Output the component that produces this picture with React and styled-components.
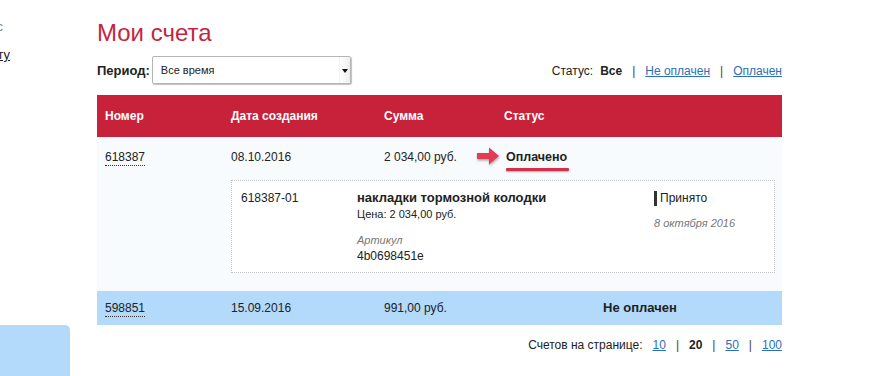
import React from 'react'
import styled, { createGlobalStyle } from 'styled-components'

const GlobalStyle = createGlobalStyle`
  html, body {
    margin: 0;
    padding: 0;
    background: #fff;
    overflow: hidden;
  }
  body {
    font-family: "Liberation Sans", Arial, sans-serif;
    font-size: 12px;
    color: #222;
  }
`

const Page = styled.div`
  display: flex;
  gap: 27px;
  height: 376px;
`

const Sidebar = styled.aside`
  width: 70px;
  flex-shrink: 0;
  display: flex;
  flex-direction: column;
`

const SideLink = styled.div`
  width: ${p => p.$width || 10}px;
  height: 14px;
  display: flex;
  justify-content: flex-end;
  overflow: hidden;
  white-space: nowrap;
  font-size: 13px;
  line-height: 14px;
  color: ${p => p.$muted ? '#888' : '#222'};
  text-decoration: ${p => p.$underline ? 'underline' : 'none'};
  margin-top: ${p => p.$top}px;
`

const SideBox = styled.div`
  margin-top: auto;
  height: 51px;
  background: #b3d9fb;
  border-top-right-radius: 5px;
`

const Main = styled.main`
  width: 685px;
  padding-top: 18px;
`

const Title = styled.h1`
  margin: 0;
  font-family: "Liberation Sans", Arial, sans-serif;
  font-weight: normal;
  font-size: 24px;
  line-height: 30px;
  color: #c4263f;
`

const Toolbar = styled.div`
  display: flex;
  align-items: center;
  justify-content: space-between;
  margin-top: 8px;
  height: 28px;
`

const Period = styled.div`
  display: flex;
  align-items: center;
  gap: 2px;
`

const Label = styled.span`
  font-weight: bold;
  font-size: 13px;
`

const Select = styled.div`
  width: 189px;
  height: 26px;
  border: 1px solid #b5b5b5;
  border-radius: 2px;
  box-shadow: 1px 1px 1px rgba(0, 0, 0, 0.25);
  display: flex;
  align-items: center;
  justify-content: space-between;
  padding-left: 8px;
  box-sizing: content-box;
  font-size: 11px;
  background: #fff;
`

const SelectArrow = styled.span`
  width: 10px;
  height: 26px;
  display: flex;
  align-items: center;
  justify-content: center;
  background: linear-gradient(to right, #fff, #eee);
  border-left: 1px solid #f2f2f2;
  &::after {
    content: '';
    border-left: 3px solid transparent;
    border-right: 3px solid transparent;
    border-top: 4px solid #111;
    margin-top: 2px;
  }
`

const Filter = styled.div`
  display: flex;
  align-items: center;
  gap: 10px;
  font-size: 12px;
  padding-top: 2px;
`

const Current = styled.b`
  font-size: 12px;
  margin-left: -3px;
`

const Sep = styled.span`
  color: #444;
`

const Link = styled.a`
  color: #2b6fb6;
  text-decoration: underline;
  cursor: pointer;
`

const Table = styled.div`
  margin-top: 11px;
`

const Cols = styled.div`
  display: grid;
  grid-template-columns: 126px 153px 120px 1fr;
  padding-left: 8px;
  align-items: center;
`

const HeadRow = styled(Cols)`
  height: 42px;
  background: #c8223b;
  color: #fff;
  font-weight: bold;
  font-size: 12px;
`

const Invoice = styled.div`
  background: ${p => p.$bg};
  padding: ${p => p.$pad};
`

const Cell = styled.div`
  line-height: 16px;
  text-align: ${p => p.$center ? 'center' : 'left'};
  font-weight: ${p => p.$bold ? 'bold' : 'normal'};
  font-size: ${p => p.$bold ? 13 : 12}px;
  padding-right: ${p => p.$center ? 6 : 0}px;
`

const Number = styled.span`
  border-bottom: 1px dotted #333;
  padding-bottom: 1px;
`

const StatusCell = styled.div`
  display: flex;
  align-items: center;
  margin-left: -28px;
  gap: 4px;
`

const Marked = styled.span`
  font-weight: bold;
  font-size: 12.5px;
  position: relative;
  &::after {
    content: '';
    position: absolute;
    left: 0;
    right: -2px;
    bottom: -7px;
    height: 3px;
    background: #d42f4a;
    border-radius: 1px;
    box-shadow: 0 1px 2px rgba(0, 0, 0, 0.3);
  }
`

const Details = styled.div`
  margin: 12px 7px 0 134px;
  border: 1px dotted #c4c4c4;
  display: grid;
  grid-template-columns: 116px 297px 1fr;
  padding: 9px 9px 9px;
  height: 73px;
  background: #fff;
`

const Stack = styled.div`
  display: flex;
  flex-direction: column;
`

const ItemName = styled.div`
  font-weight: bold;
  font-size: 13px;
  line-height: 16px;
`

const Small = styled.div`
  font-size: 11px;
  line-height: 16px;
  color: ${p => p.$muted ? '#777' : '#222'};
  font-style: ${p => p.$italic ? 'italic' : 'normal'};
  margin-top: ${p => p.$top || 0}px;
`

const Plain = styled.div`
  font-size: 12px;
  line-height: 16px;
`

const Accepted = styled.div`
  border-left: 3px solid #333;
  padding-left: 3px;
  font-size: 12px;
  line-height: 15px;
  margin-top: 1px;
`

const Pager = styled.div`
  display: flex;
  justify-content: flex-end;
  align-items: center;
  gap: 10px;
  margin-top: 13px;
  font-size: 12px;
`

const Arrow = () => (
  <svg width="26" height="22" viewBox="0 0 26 22">
    <defs>
      <filter id="sh" x="-20%" y="-20%" width="140%" height="150%">
        <feDropShadow dx="0.5" dy="1.5" stdDeviation="0.8" floodColor="#000" floodOpacity="0.35" />
      </filter>
    </defs>
    <path d="M1 7 H13 V1.5 L23 10 L13 18.5 V13 H1 Z" fill="#e23a53" filter="url(#sh)" />
  </svg>
)

export default function App() {
  return (
    <>
      <GlobalStyle />
      <Page>
        <Sidebar>
          <SideLink $top={20} $muted $width={3}>Выход с</SideLink>
          <SideLink $top={14} $underline>Вернуться к сайту</SideLink>
          <SideBox />
        </Sidebar>
        <Main>
          <Title>Мои счета</Title>
          <Toolbar>
            <Period>
              <Label>Период:</Label>
              <Select>
                Все время
                <SelectArrow />
              </Select>
            </Period>
            <Filter>
              <span>Статус:</span>
              <Current>Все</Current>
              <Sep>|</Sep>
              <Link>Не оплачен</Link>
              <Sep>|</Sep>
              <Link>Оплачен</Link>
            </Filter>
          </Toolbar>

          <Table>
            <HeadRow>
              <div>Номер</div>
              <div>Дата создания</div>
              <div>Сумма</div>
              <div>Статус</div>
            </HeadRow>

            <Invoice $bg="#f8fbfe" $pad="9px 0 18px">
              <Cols>
                <Cell><Number>618387</Number></Cell>
                <Cell>08.10.2016</Cell>
                <Cell>2 034,00 руб.</Cell>
                <StatusCell>
                  <Arrow />
                  <Marked>Оплачено</Marked>
                </StatusCell>
              </Cols>
              <Details>
                <Plain>618387-01</Plain>
                <Stack>
                  <ItemName>накладки тормозной колодки</ItemName>
                  <Small>Цена: 2 034,00 руб.</Small>
                  <Small $muted $italic $top={10}>Артикул</Small>
                  <Plain>4b0698451e</Plain>
                </Stack>
                <Stack>
                  <Accepted>Принято</Accepted>
                  <Small $muted $italic $top={9}>8 октября 2016</Small>
                </Stack>
              </Details>
            </Invoice>

            <Invoice $bg="#b3d9fb" $pad="9px 0">
              <Cols>
                <Cell><Number>598851</Number></Cell>
                <Cell>15.09.2016</Cell>
                <Cell>991,00 руб.</Cell>
                <Cell $bold $center>Не оплачен</Cell>
              </Cols>
            </Invoice>
          </Table>

          <Pager>
            <span>Счетов на странице:</span>
            <Link>10</Link>
            <Sep>|</Sep>
            <b>20</b>
            <Sep>|</Sep>
            <Link>50</Link>
            <Sep>|</Sep>
            <Link>100</Link>
          </Pager>
        </Main>
      </Page>
    </>
  )
}
